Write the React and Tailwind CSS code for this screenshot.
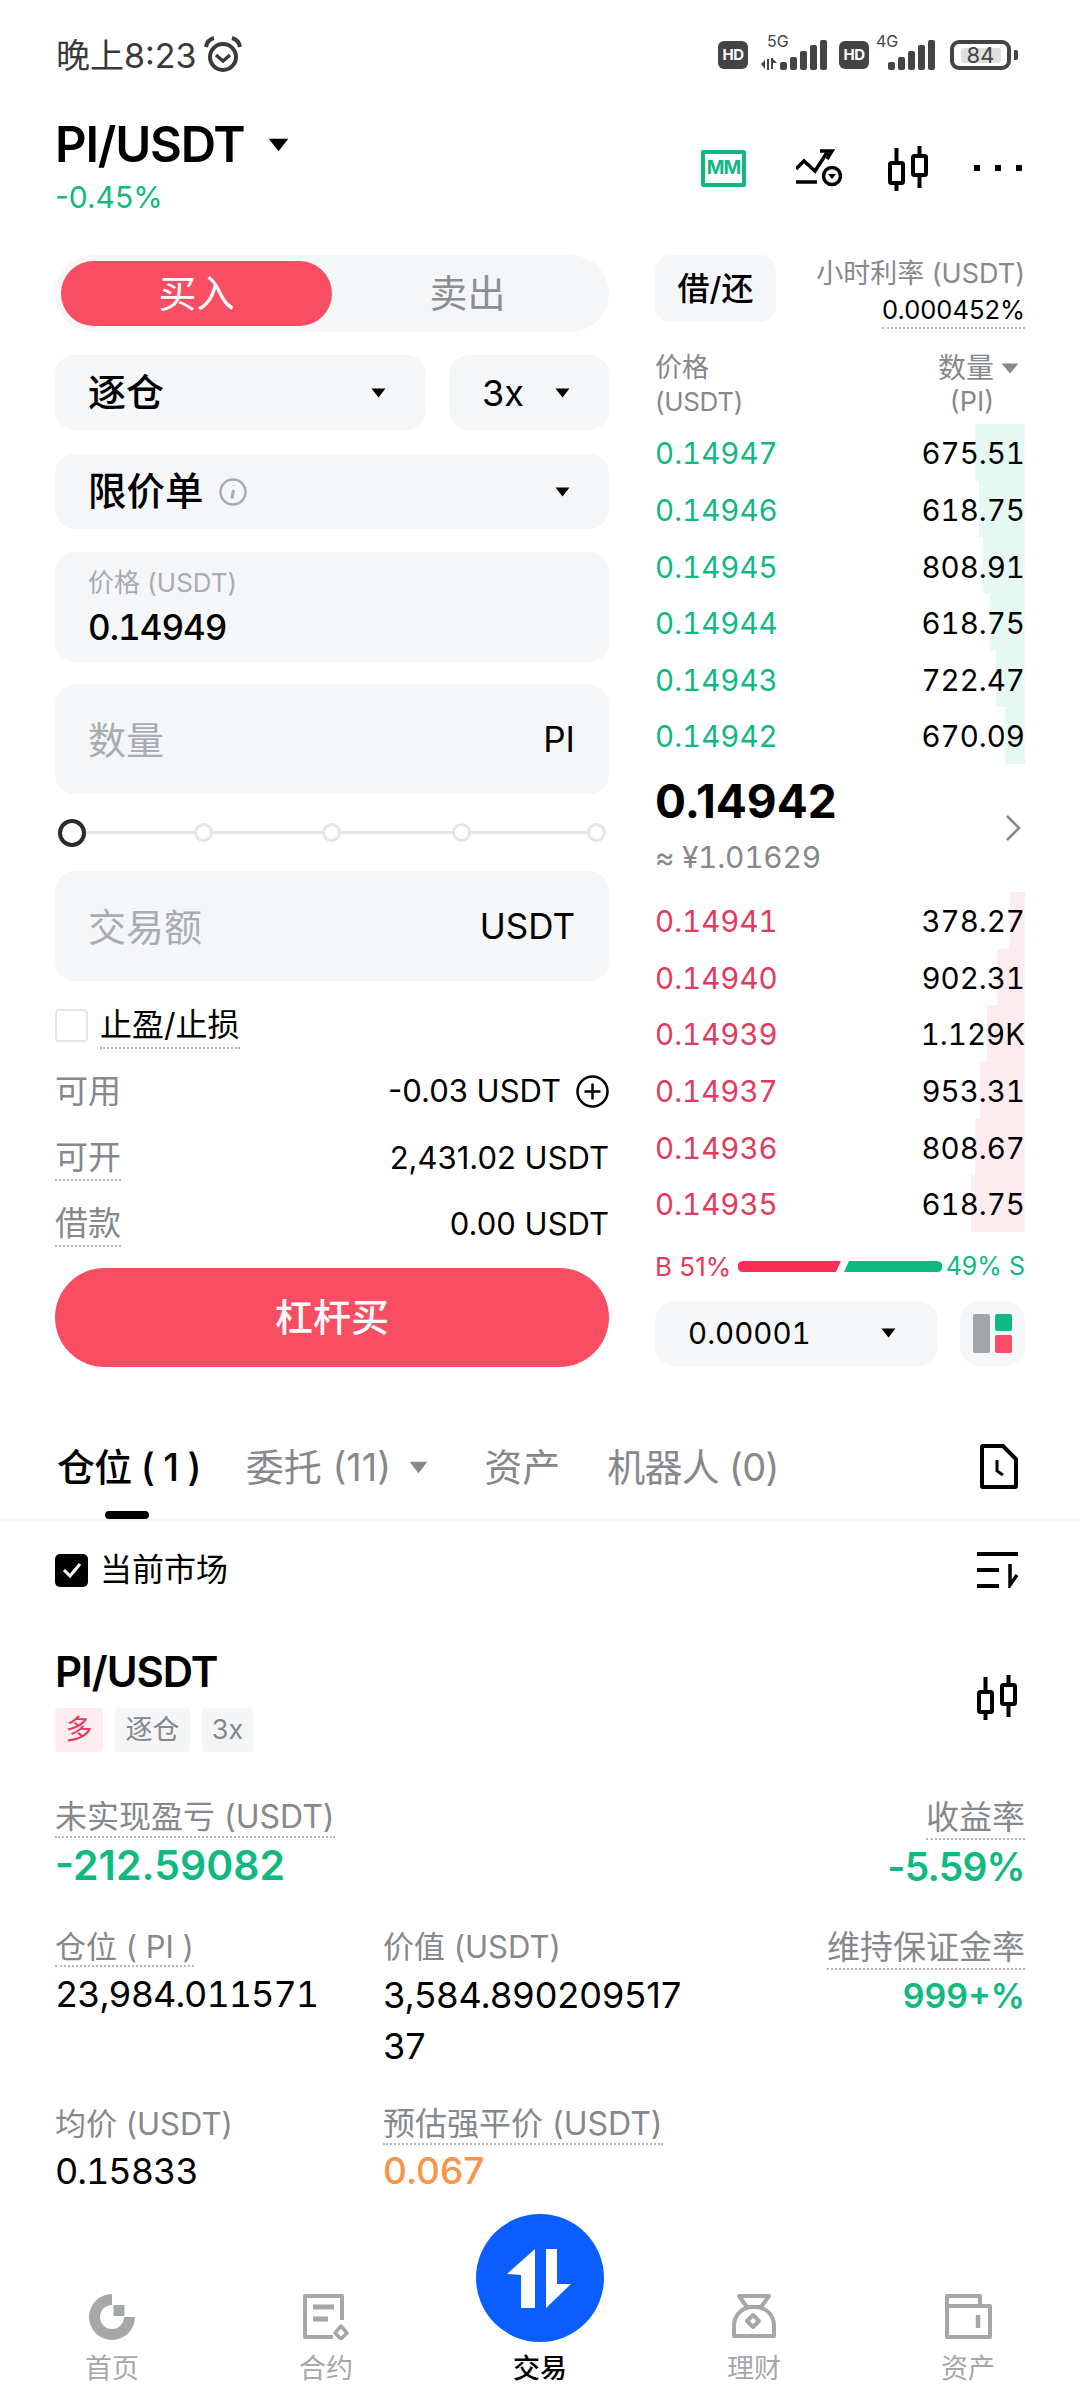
import React from 'react';

const sans = "font-[Inter,'Noto_Sans_CJK_SC',sans-serif]";

const asks = [
  ['0.14947', '675.51', 50],
  ['0.14946', '618.75', 46],
  ['0.14945', '808.91', 42],
  ['0.14944', '618.75', 35],
  ['0.14943', '722.47', 29],
  ['0.14942', '670.09', 20],
];

const bids = [
  ['0.14941', '378.27', 15],
  ['0.14940', '902.31', 28],
  ['0.14939', '1.129K', 38],
  ['0.14937', '953.31', 45],
  ['0.14936', '808.67', 50],
  ['0.14935', '618.75', 54],
];

const Caret = ({ className = '', color = '#000', w = 15, h = 10 }) => (
  <svg className={className} width={w} height={h} viewBox="0 0 15 10" preserveAspectRatio="none">
    <path d="M0.5 0.5h14L7.5 9.5z" fill={color} />
  </svg>
);

const Candles = ({ className = '' }) => (
  <svg className={className} width="41" height="45" viewBox="0 0 41 45" fill="none" stroke="#000" strokeWidth="4">
    <rect x="2" y="17" width="13" height="20" rx="1.5" />
    <path d="M8.5 2v15M8.5 37v8" />
    <rect x="25" y="10" width="13" height="19" rx="1.5" />
    <path d="M31.5 0v10M31.5 29v13" />
  </svg>
);

const Signal = () => (
  <svg width="47" height="30" viewBox="0 0 47 30" fill="#444">
    <rect x="0" y="22" width="7" height="8" rx="2" />
    <rect x="10" y="17" width="7" height="13" rx="2" />
    <rect x="20" y="11" width="7" height="19" rx="2" />
    <rect x="30" y="5" width="7" height="25" rx="2" />
    <rect x="40" y="0" width="7" height="30" rx="2" />
  </svg>
);

const Hd = () => (
  <div className="w-[30px] h-[28px] rounded-[6px] bg-[#444] text-white text-[15px] font-bold tracking-[-0.5px] flex items-center justify-center">HD</div>
);

const Dotted = ({ children, className = '' }) => (
  <span className={`border-b-2 border-dotted border-[#b4b7ba] ${className}`}>{children}</span>
);

const Field = ({ label, unit }) => (
  <div className="h-[110px] rounded-[20px] bg-[#f4f6f8] flex items-center justify-between pl-[33px] pr-[34px]">
    <span className="text-[38px] text-[#a9acb0] relative top-[1px]">{label}</span>
    <span className="text-[35px] text-black">{unit}</span>
  </div>
);

const SelectBox = ({ className = '', children }) => (
  <div className={`h-[75px] rounded-[20px] bg-[#f4f6f8] flex items-center justify-between ${className}`}>{children}</div>
);

const InfoRow = ({ label, dotted, children }) => (
  <div className="h-[66.5px] flex items-center justify-between">
    {dotted ? <Dotted className="text-[33px] leading-[44px] text-[#85888c]">{label}</Dotted> : <span className="text-[33px] text-[#85888c]">{label}</span>}
    <div className="text-[31px] text-black flex items-center">{children}</div>
  </div>
);

const BookRow = ({ price, amount, depth, priceColor, barColor }) => (
  <div className="h-[56.67px] pt-[2px] relative flex items-center justify-between tabular-nums">
    <div className="absolute right-0 top-0 bottom-0" style={{ width: depth, backgroundColor: barColor }} />
    <span className={`relative text-[29.5px] ${priceColor}`}>{price}</span>
    <span className="relative text-[29.5px] text-black">{amount}</span>
  </div>
);

const Tag = ({ className = '', children }) => (
  <div className={`h-[44px] rounded-[4px] flex items-center justify-center text-[27px] ${className}`}>{children}</div>
);

const NavItem = ({ label, icon }) => (
  <div className="flex flex-col items-center">
    {icon}
    <span className="mt-[14px] text-[27px] leading-[30px] text-[#a5a8ab]">{label}</span>
  </div>
);

export default function App() {
  return (
    <div className={`w-[1080px] h-[2400px] bg-white overflow-hidden ${sans}`}>
      {/* status bar */}
      <div className="h-[110px] pl-[56px] pr-[62px] flex items-center justify-between">
        <div className="flex items-center text-[#3a3a3a] text-[34px]">
          <span>晚上8:23</span>
          <svg className="ml-[6px]" width="40" height="38" viewBox="0 0 40 38" fill="none" stroke="#3a3a3a">
            <circle cx="20" cy="21" r="13" strokeWidth="4" />
            <path d="M13 19l7 6 7-6" strokeWidth="3.5" />
            <path d="M3 11C4 6 7 3 11 2M37 11C36 6 33 3 29 2" strokeWidth="4" />
          </svg>
        </div>
        <div className="flex items-center">
          <Hd />
          <div className="relative ml-[13px] w-[66px] h-[30px] flex justify-end">
            <span className="absolute left-[6px] -top-[8px] text-[16px] leading-[18px] text-[#444]">5G</span>
            <svg className="absolute left-0 bottom-0" width="17" height="12" viewBox="0 0 17 12" fill="#444">
              <path d="M0 6l4-4v9zM6 1h2v11H6zM10 0h2v11h-2zM12 1l4 4h-4z" />
            </svg>
            <Signal />
          </div>
          <div className="ml-[12px]"><Hd /></div>
          <div className="relative ml-[7px] w-[59px] h-[30px] flex justify-end">
            <span className="absolute left-0 -top-[8px] text-[16px] leading-[18px] text-[#444]">4G</span>
            <Signal />
          </div>
          <div className="ml-[15px] w-[61px] h-[30px] rounded-[9px] border-[4px] border-[#444] flex items-center justify-center">
            <div className="w-[40px] h-[15px] rounded-[3px] bg-[#dfdfdf] flex items-center justify-center text-[22px] text-[#444]">84</div>
          </div>
          <div className="ml-[3px] w-[4px] h-[10px] rounded-r-[2px] bg-[#444]" />
        </div>
      </div>

      {/* pair header */}
      <div className="h-[145px] pl-[55px] pr-[58px] flex justify-between">
        <div>
          <div className="flex items-center h-[64px] mt-[3px]">
            <span className="text-[49px] font-semibold text-black tracking-[-1.2px]">PI/USDT</span>
            <Caret className="ml-[24px]" w={21} h={14} />
          </div>
          <div className="text-[30px] leading-[40px] text-[#10b981]">-0.45%</div>
        </div>
        <div className="flex items-start pt-[36px]">
          <div className="mt-[4px] w-[45px] h-[37px] border-[4px] border-[#13b784] rounded-[2px] flex items-center justify-center text-[19px] font-bold text-[#13b784] tracking-[-1px]">MM</div>
          <svg className="ml-[50px] mt-[3px]" width="46" height="38" viewBox="0 0 46 38" fill="none" stroke="#000" strokeWidth="3.5">
            <path d="M0 20l8-8 11 10L32 2" />
            <path d="M24 2h12l-5 8" />
            <path d="M0 33h21" />
            <circle cx="36" cy="27" r="8.5" />
            <path d="M32 25h8l-4 5z" fill="#000" stroke="none" />
          </svg>
          <Candles className="ml-[46px]" />
          <div className="ml-[45px] mt-[19px] flex gap-[15px]">
            <div className="w-[6px] h-[6px] bg-black" />
            <div className="w-[6px] h-[6px] bg-black" />
            <div className="w-[6px] h-[6px] bg-black" />
          </div>
        </div>
      </div>

      {/* trade panel + order book */}
      <div className="pl-[55px] pr-[55px] flex justify-between">
        <div className="w-[554px]">
          <div className="h-[77px] rounded-full bg-[#f4f6f8] flex items-center pl-[6px] pr-[6px]">
            <div className="w-[271px] h-[65px] rounded-full bg-[#f94d63] text-white text-[38px] flex items-center justify-center">买入</div>
            <div className="flex-1 text-center text-[38px] text-[#8b8e92]">卖出</div>
          </div>
          <div className="mt-[23px] flex gap-[23px]">
            <SelectBox className="w-[371px] pl-[33px] pr-[40px]">
              <span className="text-[38px] font-medium text-black">逐仓</span>
              <Caret />
            </SelectBox>
            <SelectBox className="flex-1 pl-[33px] pr-[39px]">
              <span className="text-[36px] text-black">3x</span>
              <Caret />
            </SelectBox>
          </div>
          <SelectBox className="mt-[24px] pl-[33px] pr-[39px]">
            <div className="flex items-center">
              <span className="text-[38.5px] font-medium text-black">限价单</span>
              <svg className="ml-[15px]" width="28" height="28" viewBox="0 0 28 28" fill="none">
                <circle cx="14" cy="14" r="12.5" stroke="#a9acb0" strokeWidth="2.5" />
                <path d="M15 7.5v.5M14.5 12l-1.5 8.5" stroke="#a9acb0" strokeWidth="3" />
              </svg>
            </div>
            <Caret />
          </SelectBox>
          <div className="mt-[23px] h-[110px] rounded-[20px] bg-[#f4f6f8] pl-[33px] pt-[15px]">
            <div className="text-[26px] leading-[32px] text-[#a9acb0]">价格 (USDT)</div>
            <div className="text-[35px] leading-[44px] mt-[6px] font-medium text-black tabular-nums tracking-[-1px]">0.14949</div>
          </div>
          <div className="mt-[22px]">
            <Field label="数量" unit="PI" />
          </div>
          <div className="h-[77px] relative flex items-center">
            <div className="absolute left-[17px] right-[13px] h-[3px] bg-[#e3e5e7]" />
            <div className="relative ml-[3px] w-[28px] h-[28px] rounded-full bg-white border-[4px] border-[#2c2c2c]" />
            <div className="relative ml-[107.5px] w-[19px] h-[19px] rounded-full bg-white border-[3px] border-[#e3e5e7]" />
            <div className="relative ml-[109px] w-[19px] h-[19px] rounded-full bg-white border-[3px] border-[#e3e5e7]" />
            <div className="relative ml-[111px] w-[19px] h-[19px] rounded-full bg-white border-[3px] border-[#e3e5e7]" />
            <div className="relative ml-[116px] w-[19px] h-[19px] rounded-full bg-white border-[3px] border-[#e3e5e7]" />
          </div>
          <Field label="交易额" unit="USDT" />
          <div className="mt-[28px] h-[33px] flex items-center">
            <div className="w-[33px] h-[33px] rounded-[4px] border-2 border-[#e3e5e7]" />
            <Dotted className="ml-[12px] text-[32px] leading-[44px] text-black">止盈/止损</Dotted>
          </div>
          <div className="mt-[16px]">
            <InfoRow label="可用">
              <span>-0.03 USDT</span>
              <svg className="ml-[15px]" width="33" height="33" viewBox="0 0 33 33" fill="none" stroke="#000" strokeWidth="2.5">
                <circle cx="16.5" cy="16.5" r="15" />
                <path d="M16.5 8.5v16M8.5 16.5h16" />
              </svg>
            </InfoRow>
            <InfoRow label="可开" dotted>2,431.02 USDT</InfoRow>
            <InfoRow label="借款" dotted>0.00 USDT</InfoRow>
          </div>
          <div className="mt-[10.5px] h-[99px] rounded-full bg-[#f94d63] text-white text-[38px] font-medium flex items-center justify-center">杠杆买</div>
        </div>

        <div className="w-[370px]">
          <div className="h-[95px] flex justify-between">
            <div className="w-[121px] h-[67px] rounded-[16px] bg-[#f4f6f8] text-[32px] font-medium text-black flex items-center justify-center">借/还</div>
            <div className="flex flex-col items-end">
              <span className="text-[27px] leading-[38px] text-[#85888c]">小时利率 (USDT)</span>
              <Dotted className="text-[25.5px] leading-[34px] text-black">0.000452%</Dotted>
            </div>
          </div>
          <div className="h-[74px] flex justify-between text-[27px] leading-[34px] text-[#85888c]">
            <div>
              <div className="pt-[1px]">价格</div>
              <div className="text-[26px] tracking-[-0.3px]">(USDT)</div>
            </div>
            <div className="pr-[31px] flex flex-col items-end">
              <div className="relative pt-[1px] text-[28px]">
                <span>数量</span>
                <Caret className="absolute -right-[25px] top-[13px]" color="#85888c" w={18} h={11} />
              </div>
              <span>(PI)</span>
            </div>
          </div>
          {asks.map(([p, a, d]) => (
            <BookRow key={p} price={p} amount={a} depth={d} priceColor="text-[#10b981]" barColor="#e6f8f2" />
          ))}
          <div className="h-[128px] flex justify-between items-center">
            <div>
              <div className="text-[46px] leading-[56px] font-bold text-black -mt-[3px]">0.14942</div>
              <div className="mt-[6px] text-[30px] tracking-[-0.3px] leading-[44px] text-[#85888c] tabular-nums">≈ ¥1.01629</div>
            </div>
            <svg className="mr-[3px]" width="17" height="28" viewBox="0 0 17 28" fill="none" stroke="#85888c" strokeWidth="2.5">
              <path d="M2 2l12 12L2 26" />
            </svg>
          </div>
          {bids.map(([p, a, d]) => (
            <BookRow key={p} price={p} amount={a} depth={d} priceColor="text-[#e43a5c]" barColor="#fdecef" />
          ))}
          <div className="h-[69px] flex items-center text-[26px]">
            <span className="w-[83px] text-[#e43a5c]">B 51%</span>
            <svg width="204" height="11" viewBox="0 0 204 11">
              <path d="M5 0h98l-5 11H5a5.5 5.5 0 010-11z" fill="#fb2d55" />
              <path d="M111 0h88a5.5 5.5 0 010 11h-93z" fill="#10b981" />
            </svg>
            <span className="flex-1 text-right text-[25px] text-[#10b981]">49% S</span>
          </div>
          <div className="h-[65px] flex justify-between">
            <div className="w-[283px] rounded-[20px] bg-[#f4f6f8] pl-[33px] pr-[42px] flex items-center justify-between tabular-nums">
              <span className="text-[29.5px] text-black">0.00001</span>
              <Caret />
            </div>
            <div className="w-[65px] rounded-[20px] bg-[#f4f6f8] flex items-center justify-center">
              <div className="flex gap-[5px]">
                <div className="w-[17px] h-[39px] rounded-[2px] bg-[#a1a4a8]" />
                <div className="flex flex-col gap-[4px]">
                  <div className="w-[17px] h-[17px] rounded-[2px] bg-[#10b981]" />
                  <div className="w-[17px] h-[18px] rounded-[2px] bg-[#f94d63]" />
                </div>
              </div>
            </div>
          </div>
        </div>
      </div>

      {/* tabs */}
      <div className="mt-[60px] h-[94px] relative border-b-2 border-[#f3f3f3] pl-[57px] pr-[62px] flex items-start justify-between">
        <div className="flex items-center h-[80px] text-[38px] text-[#85888c]">
          <span className="font-medium text-black tracking-[-0.8px]">仓位 ( 1 )</span>
          <span className="ml-[45px]">委托 (11)</span>
          <Caret className="ml-[18px]" color="#85888c" w={19} h={13} />
          <span className="ml-[56px]">资产</span>
          <span className="ml-[47px] tracking-[-0.7px]">机器人 (0)</span>
        </div>
        <svg className="mt-[17px]" width="38" height="45" viewBox="0 0 38 45" fill="none" stroke="#000" strokeWidth="4">
          <path d="M2 3a1 1 0 011-1h20l13 13v27a1 1 0 01-1 1H3a1 1 0 01-1-1z" />
          <path d="M17 16v11l6 4" strokeWidth="3" />
        </svg>
        <div className="absolute left-[105px] bottom-0 w-[44px] h-[8px] rounded-full bg-black" />
      </div>

      {/* current market filter */}
      <div className="mt-[31px] pl-[55px] pr-[62px] h-[36px] flex items-center justify-between">
        <div className="flex items-center">
          <div className="w-[33px] h-[33px] rounded-[5px] bg-black flex items-center justify-center">
            <svg width="20" height="16" viewBox="0 0 20 16" fill="none" stroke="#fff" strokeWidth="3">
              <path d="M2 8l6 6L18 2" />
            </svg>
          </div>
          <span className="ml-[12px] text-[32px] text-black">当前市场</span>
        </div>
        <svg width="41" height="36" viewBox="0 0 41 36" fill="none" stroke="#000" strokeWidth="4">
          <path d="M0 2h41M0 18h22M0 34h22" />
          <path d="M33 12v21l7-10" strokeWidth="3.5" />
        </svg>
      </div>

      {/* position card */}
      <div className="mt-[55px] pl-[55px] pr-[62px] flex items-center justify-between">
        <div>
          <div className="text-[42px] leading-[58px] font-semibold text-black tracking-[-1px]">PI/USDT</div>
          <div className="mt-[7px] flex gap-[12px]">
            <Tag className="w-[48px] bg-[#fdecef] text-[#e43a5c]">多</Tag>
            <Tag className="w-[75px] bg-[#f4f5f6] text-[#85888c]">逐仓</Tag>
            <Tag className="w-[51px] bg-[#f4f5f6] text-[#85888c]">3x</Tag>
          </div>
        </div>
        <Candles />
      </div>

      <div className="mt-[44px] px-[55px]">
        <div className="flex justify-between">
          <div>
            <Dotted className="text-[32px] leading-[42px] text-[#85888c]">未实现盈亏 (USDT)</Dotted>
            <div className="text-[41px] leading-[54px] font-semibold text-[#10b981]">-212.59082</div>
          </div>
          <div className="flex flex-col items-end">
            <Dotted className="text-[33px] leading-[42px] text-[#85888c]">收益率</Dotted>
            <div className="text-[39px] leading-[54px] font-semibold text-[#10b981] tracking-[-0.8px]">-5.59%</div>
          </div>
        </div>
        <div className="mt-[32px] grid grid-cols-[328px_1fr_auto]">
          <div>
            <Dotted className="text-[31px] leading-[42px] text-[#85888c]">仓位 ( PI )</Dotted>
            <div className="mt-[2px] text-[36px] leading-[48px] text-black tabular-nums tracking-[-1px]">23,984.011571</div>
          </div>
          <div>
            <span className="text-[31px] leading-[42px] text-[#85888c]">价值 (USDT)</span>
            <div className="mt-[2px] w-[312px] break-all text-[36px] leading-[51px] text-black">3,584.890209517<wbr />37</div>
          </div>
          <div className="flex flex-col items-end">
            <Dotted className="text-[33px] leading-[42px] text-[#85888c]">维持保证金率</Dotted>
            <div className="mt-[2px] text-[34px] leading-[48px] font-semibold text-[#10b981]">999+%</div>
          </div>
        </div>
        <div className="mt-[31px] grid grid-cols-[328px_1fr]">
          <div>
            <span className="text-[31px] leading-[42px] text-[#85888c]">均价 (USDT)</span>
            <div className="mt-[2px] text-[36px] leading-[48px] text-black tabular-nums tracking-[-1px]">0.15833</div>
          </div>
          <div>
            <Dotted className="text-[32px] leading-[42px] text-[#85888c]">预估强平价 (USDT)</Dotted>
            <div className="mt-[2px] text-[37px] leading-[48px] font-medium text-[#f5964a]">0.067</div>
          </div>
        </div>
      </div>

      {/* bottom nav */}
      <div className="mt-[19px] px-[5px] grid grid-cols-5 items-end">
        <NavItem label="首页" icon={
          <svg width="47" height="46" viewBox="0 0 47 46" fill="#a5a8ab">
            <path d="M23 0A23 23 0 1046 23H35A12 12 0 1123 11z" />
            <rect x="24.5" y="11" width="11" height="11" />
          </svg>
        } />
        <NavItem label="合约" icon={
          <svg width="46" height="46" viewBox="0 0 46 46" fill="none" stroke="#a5a8ab" strokeWidth="4" strokeLinejoin="round">
            <path d="M39 26V2H2v41h28" />
            <path d="M10 13h21M10 25h15" strokeWidth="5" />
            <path d="M38 32l6 7-6 6-6-6z" strokeWidth="3.5" />
          </svg>
        } />
        <div className="flex flex-col items-center">
          <div className="w-[128px] h-[128px] rounded-full bg-[#0a5eff]">
            <svg width="128" height="128" viewBox="0 0 128 128" fill="#fff">
              <path d="M59 35v59H45V61l-14-1zM70 35h11v35h14L70 94z" />
            </svg>
          </div>
          <span className="mt-[12px] text-[27px] leading-[30px] text-black font-medium">交易</span>
        </div>
        <NavItem label="理财" icon={
          <svg width="44" height="46" viewBox="0 0 44 46" fill="none" stroke="#a5a8ab" strokeWidth="4" strokeLinejoin="round">
            <path d="M7 2h30l-8 11H15z" />
            <path d="M2 42V32C2 21 10 13 21 13h2c11 0 19 8 19 19v10z" />
            <path d="M21 21l6 6-6 6-6-6z" strokeWidth="4" />
          </svg>
        } />
        <NavItem label="资产" icon={
          <svg width="47" height="46" viewBox="0 0 47 46" fill="none" stroke="#a5a8ab" strokeWidth="4" strokeLinejoin="round">
            <path d="M2 13V2h33v11" />
            <path d="M2 12h43v31H2z" />
            <path d="M33 21v13" strokeWidth="4.5" />
          </svg>
        } />
      </div>
    </div>
  );
}
